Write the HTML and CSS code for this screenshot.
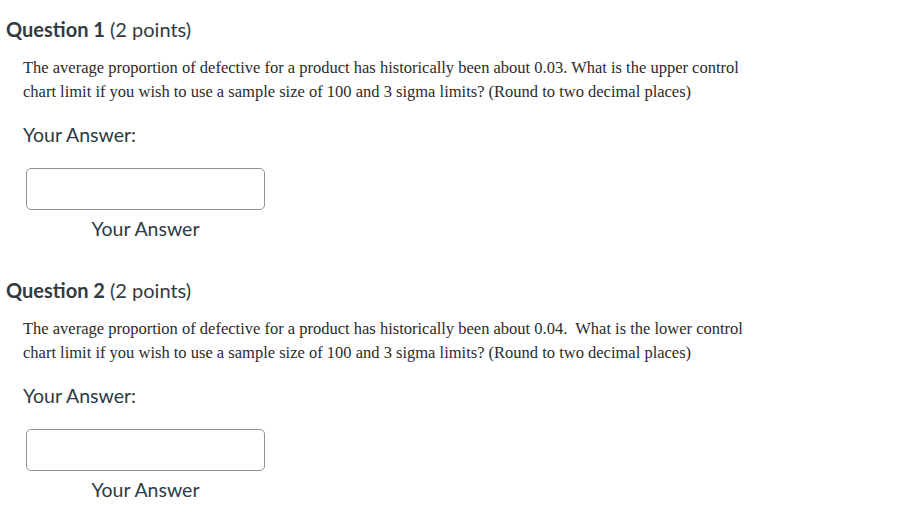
FILE: index.html
```html
<!DOCTYPE html>
<html>
<head>
<meta charset="utf-8">
<link rel="stylesheet" href="styles.css">
</head>
<body>
<div class="quiz">
  <div class="question">
    <h2 class="q-title"><strong>Question 1</strong> (2 points)</h2>
    <div class="q-body">
      <p class="q-text">The average proportion of defective for a product has historically been about 0.03. What is the upper control<br>chart limit if you wish to use a sample size of 100 and 3 sigma limits? (Round to two decimal places)</p>
      <div class="answer-label">Your Answer:</div>
      <div class="answer">
        <input class="answer-input" type="text" aria-label="Your Answer">
        <div class="answer-caption">Your Answer</div>
      </div>
    </div>
  </div>
  <div class="question">
    <h2 class="q-title"><strong>Question 2</strong> (2 points)</h2>
    <div class="q-body">
      <p class="q-text">The average proportion of defective for a product has historically been about 0.04.&nbsp; What is the lower control<br>chart limit if you wish to use a sample size of 100 and 3 sigma limits? (Round to two decimal places)</p>
      <div class="answer-label">Your Answer:</div>
      <div class="answer">
        <input class="answer-input" type="text" aria-label="Your Answer">
        <div class="answer-caption">Your Answer</div>
      </div>
    </div>
  </div>
</div>
</body>
</html>
```

FILE: styles.css
```css
html, body {
  margin: 0;
  padding: 0;
  background: #ffffff;
}
.quiz {
  padding: 17px 0 0 6px;
  font-family: Lato, "Liberation Sans", sans-serif;
  color: #2d3b45;
}
.question + .question {
  margin-top: 37px;
}
.q-title {
  margin: 0;
  font-size: 20px;
  line-height: 24px;
  font-weight: 400;
  color: #333a40;
}
.q-title strong {
  font-weight: 700;
}
.q-body {
  padding-left: 17px;
}
.q-text {
  margin: 15px 0 0 0;
  font-family: "Liberation Serif", "Times New Roman", serif;
  font-size: 16.5px;
  line-height: 24px;
  color: #2b2b2b;
}
.answer-label {
  margin-top: 19px;
  font-size: 19.5px;
  line-height: 24px;
  color: #2d3b45;
}
.answer {
  margin: 21px 0 0 3px;
  width: 239px;
  display: flex;
  flex-direction: column;
}
.answer-input {
  box-sizing: border-box;
  width: 239px;
  height: 42px;
  margin: 0;
  border: 1px solid #8f9396;
  border-radius: 5px;
  background: #fff;
}
.answer-caption {
  margin-top: 7px;
  text-align: center;
  font-size: 19.5px;
  line-height: 24px;
  color: #2d3b45;
}
```
